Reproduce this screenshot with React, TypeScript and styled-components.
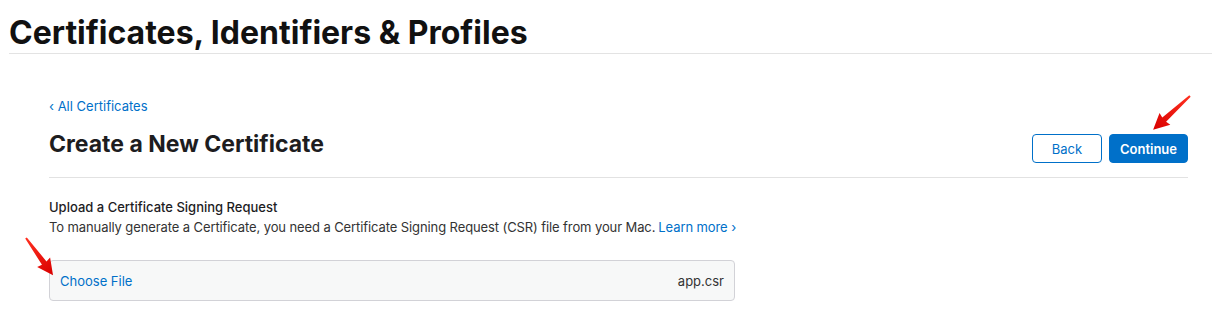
import styled, { createGlobalStyle } from 'styled-components';

const GlobalStyle = createGlobalStyle`
  body {
    margin: 0;
    background: #fff;
    font-family: Inter, "Noto Sans", Arial, sans-serif;
    color: #1d1d1f;
  }
`;

const Page = styled.div`
  position: relative;
  width: 1212px;
  height: 317px;
  overflow: hidden;
`;

const TopBar = styled.header`
  margin-left: 9px;
  height: 54px;
  border-bottom: 1px solid #e3e3e3;
  box-sizing: border-box;
  display: flex;
  align-items: flex-end;
`;

const PageTitle = styled.h1`
  margin: 0;
  font-size: 32px;
  font-weight: 700;
  color: #111;
  line-height: 40px;
`;

const Content = styled.main`
  padding: 43px 24px 0 49px;
`;

const BackLink = styled.a`
  display: block;
  font-size: 13px;
  line-height: 18px;
  color: #0070c9;
  text-decoration: none;
`;

const HeadRow = styled.div`
  display: flex;
  justify-content: space-between;
  align-items: flex-end;
  padding: 14px 0 14px;
  border-bottom: 1px solid #e2e2e2;
`;

const SectionTitle = styled.h2`
  margin: 0 0 4px;
  font-size: 23px;
  font-weight: 700;
  line-height: 30px;
  color: #1d1d1f;
`;

const Actions = styled.div`
  display: flex;
  gap: 7px;
`;

const Button = styled.button<{ $primary?: boolean }>`
  box-sizing: border-box;
  height: 29px;
  width: ${p => (p.$primary ? '79px' : '70px')};
  padding: 0;
  border-radius: 4px;
  font-family: inherit;
  font-size: 13px;
  font-weight: ${p => (p.$primary ? 600 : 400)};
  border: 1px solid #0070c9;
  background: ${p => (p.$primary ? '#0070c9' : '#fff')};
  color: ${p => (p.$primary ? '#fff' : '#0070c9')};
`;

const Upload = styled.section`
  padding-top: 21px;
`;

const Label = styled.div`
  font-size: 13px;
  font-weight: 500;
  line-height: 17px;
  color: #1d1d1f;
`;

const Hint = styled.p`
  margin: 2px 0 0;
  font-size: 13px;
  line-height: 18px;
  letter-spacing: -0.1px;
  color: #333;
`;

const InlineLink = styled.a`
  color: #0070c9;
  text-decoration: none;
  margin-left: 3px;
`;

const FileBox = styled.div`
  margin-top: 24px;
  width: 686px;
  height: 41px;
  box-sizing: border-box;
  border: 1px solid #d2d2d7;
  border-radius: 4px;
  background: #f7f8f8;
  display: flex;
  align-items: center;
  justify-content: space-between;
  padding: 0 10px;
  font-size: 13px;
`;

const ChooseFile = styled.span`
  color: #0070c9;
`;

const FileName = styled.span`
  color: #333;
`;

const Arrow = styled.svg<{ $left: number; $top: number }>`
  position: absolute;
  left: ${p => p.$left}px;
  top: ${p => p.$top}px;
  overflow: visible;
`;

const ArrowShape = ({ id, length }: { id: string; length: number }) => (
  <>
    <defs>
      <linearGradient id={id} x1="0" y1="0" x2="1" y2="0">
        <stop offset="0" stopColor="#ff3020" />
        <stop offset="1" stopColor="#d80000" />
      </linearGradient>
    </defs>
    <path
      d={`M0 -1 L${length - 15} -2.8 L${length - 16} -8 L${length} 0 L${length - 16} 8 L${length - 15} 2.8 L0 1 Z`}
      fill={`url(#${id})`}
    />
  </>
);

export default function App() {
  return (
    <Page>
      <GlobalStyle />
      <TopBar>
        <PageTitle>Certificates, Identifiers &amp; Profiles</PageTitle>
      </TopBar>
      <Content>
        <BackLink href="#">‹ All Certificates</BackLink>
        <HeadRow>
          <SectionTitle>Create a New Certificate</SectionTitle>
          <Actions>
            <Button>Back</Button>
            <Button $primary>Continue</Button>
          </Actions>
        </HeadRow>
        <Upload>
          <Label>Upload a Certificate Signing Request</Label>
          <Hint>
            To manually generate a Certificate, you need a Certificate Signing Request (CSR) file from your Mac.
            <InlineLink href="#">Learn more ›</InlineLink>
          </Hint>
          <FileBox>
            <ChooseFile>Choose File</ChooseFile>
            <FileName>app.csr</FileName>
          </FileBox>
        </Upload>
      </Content>
      <Arrow $left={1190} $top={96} width="1" height="1">
        <g transform="rotate(137.5)">
          <ArrowShape id="a1" length={50} />
        </g>
      </Arrow>
      <Arrow $left={26} $top={238} width="1" height="1">
        <g transform="rotate(54)">
          <ArrowShape id="a2" length={46} />
        </g>
      </Arrow>
    </Page>
  );
}
